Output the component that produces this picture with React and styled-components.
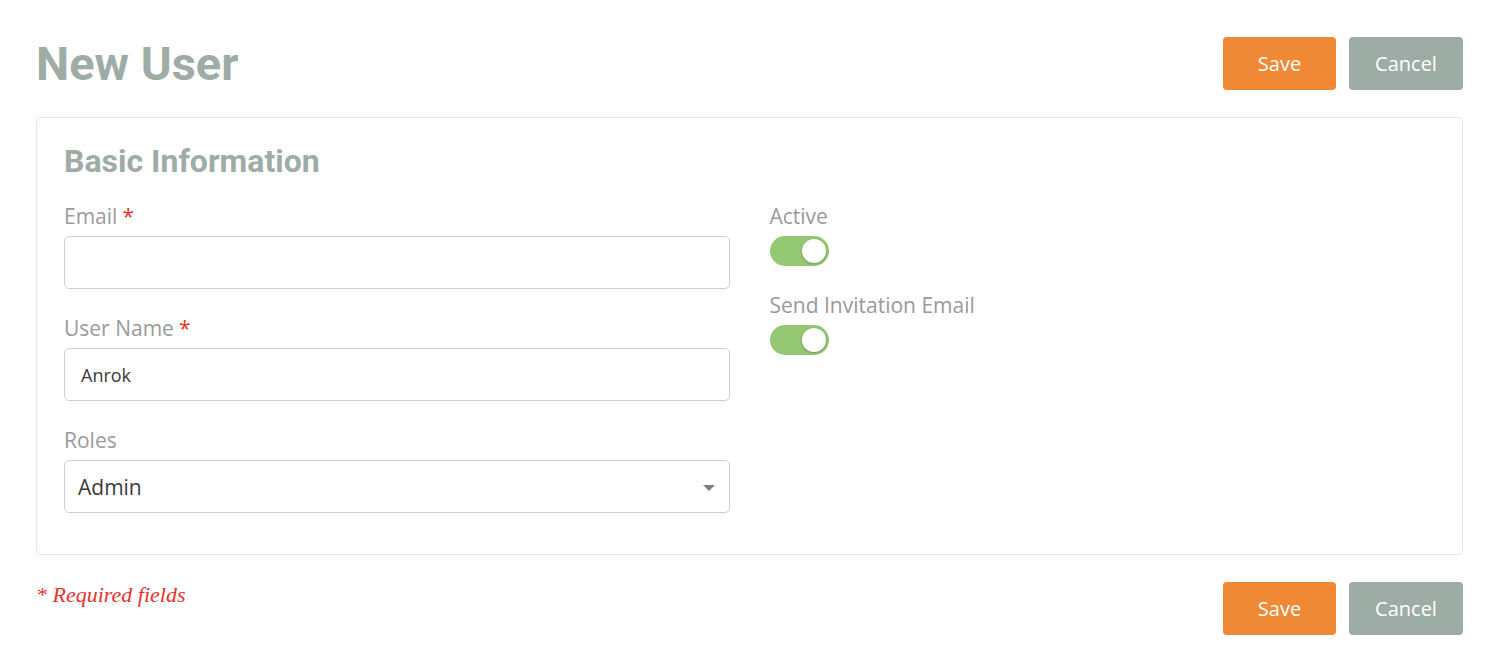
import React from "react";
import styled, { createGlobalStyle } from "styled-components";

const Global = createGlobalStyle`
  html, body { margin: 0; padding: 0; background: #fff; }
  body { font-family: "Open Sans", "Liberation Sans", sans-serif; }
  * { box-sizing: border-box; }
`;

const Page = styled.div`
  padding: 37px 29px 0 36px;
  width: 1492px;
`;

const Header = styled.div`
  display: flex;
  align-items: center;
  justify-content: space-between;
  margin-bottom: 27px;
`;

const Title = styled.h1`
  margin: 0;
  font-family: Roboto, "Liberation Sans", sans-serif;
  font-weight: 700;
  font-size: 47px;
  line-height: 53px;
  color: #9dada6;
`;

const Actions = styled.div`
  display: flex;
  gap: 13px;
`;

const Button = styled.button`
  min-width: 113px;
  height: 53px;
  padding: 0 24px;
  border: none;
  border-radius: 4px;
  font-family: "Open Sans", "Liberation Sans", sans-serif;
  font-size: 20px;
  color: #fff;
  background: ${(p) => (p.$variant === "primary" ? "#f08935" : "#9eaca6")};
  cursor: pointer;
  &:last-child { min-width: 114px; }
`;

const Card = styled.section`
  border: 1px solid #e4e6e5;
  border-radius: 4px;
  padding: 25px 27px 41px 27px;
`;

const CardTitle = styled.h2`
  margin: 0 0 23px 0;
  font-family: Roboto, "Liberation Sans", sans-serif;
  font-weight: 700;
  font-size: 32px;
  line-height: 36px;
  color: #9dada6;
`;

const Columns = styled.div`
  display: grid;
  grid-template-columns: 1fr 1fr;
  column-gap: 40px;
`;

const Column = styled.div`
  display: flex;
  flex-direction: column;
  gap: 25px;
`;

const Field = styled.div`
  display: flex;
  flex-direction: column;
  align-items: flex-start;
`;

const Label = styled.label`
  font-size: 21px;
  line-height: 28px;
  color: #9a9a9a;
  margin-bottom: 6px;
`;

const Star = styled.span`
  color: #e8322b;
  margin-left: 5px;
`;

const Input = styled.div`
  width: 100%;
  height: 53px;
  border: 1px solid #cfcfcf;
  border-radius: 5px;
  display: flex;
  align-items: center;
  padding: 0 ${(p) => (p.$large ? "13px" : "16px")};
  font-size: ${(p) => (p.$large ? "21px" : "18px")};
  color: #3a3a3a;
  position: relative;
`;

const Caret = styled.span`
  position: absolute;
  right: 14px;
  top: 50%;
  margin-top: -2px;
  width: 0;
  height: 0;
  border-left: 6px solid transparent;
  border-right: 6px solid transparent;
  border-top: 6px solid #7d7d7d;
`;

const Toggle = styled.div`
  width: 59px;
  height: 30px;
  border-radius: 15px;
  background: #95c872;
  position: relative;
`;

const Knob = styled.span`
  position: absolute;
  top: 3px;
  right: 3px;
  width: 24px;
  height: 24px;
  border-radius: 50%;
  background: #fff;
  box-shadow: 0 1px 3px rgba(0, 0, 0, 0.25);
`;

const Footer = styled.div`
  display: flex;
  justify-content: space-between;
  align-items: flex-start;
  margin-top: 27px;
`;

const Required = styled.div`
  margin-top: 0;
  font-family: "Liberation Serif", "DejaVu Serif", serif;
  font-style: italic;
  font-size: 22px;
  line-height: 26px;
  color: #e8322b;
`;

export default function App() {
  return (
    <>
      <Global />
      <Page>
        <Header>
          <Title>New User</Title>
          <Actions>
            <Button $variant="primary">Save</Button>
            <Button>Cancel</Button>
          </Actions>
        </Header>
        <Card>
          <CardTitle>Basic Information</CardTitle>
          <Columns>
            <Column>
              <Field>
                <Label>
                  Email<Star>*</Star>
                </Label>
                <Input />
              </Field>
              <Field>
                <Label>
                  User Name<Star>*</Star>
                </Label>
                <Input>Anrok</Input>
              </Field>
              <Field>
                <Label>Roles</Label>
                <Input $large>
                  Admin
                  <Caret />
                </Input>
              </Field>
            </Column>
            <Column>
              <Field>
                <Label>Active</Label>
                <Toggle>
                  <Knob />
                </Toggle>
              </Field>
              <Field>
                <Label>Send Invitation Email</Label>
                <Toggle>
                  <Knob />
                </Toggle>
              </Field>
            </Column>
          </Columns>
        </Card>
        <Footer>
          <Required>* Required fields</Required>
          <Actions>
            <Button $variant="primary">Save</Button>
            <Button>Cancel</Button>
          </Actions>
        </Footer>
      </Page>
    </>
  );
}
